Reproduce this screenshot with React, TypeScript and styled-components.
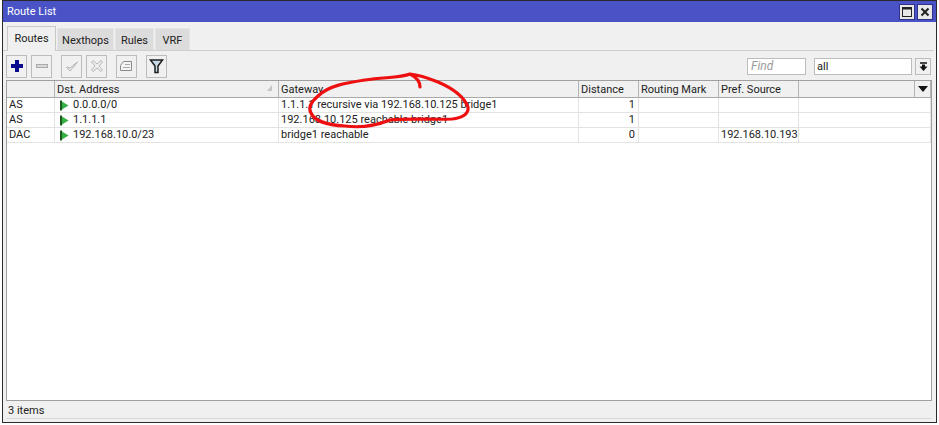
import React from 'react';
import styled, { createGlobalStyle } from 'styled-components';

const Global = createGlobalStyle`
  html, body { margin: 0; padding: 0; background: #ffffff; }
  body { font-family: Roboto, "Liberation Sans", Arial, sans-serif; font-size: 11px; color: #222222; }
`;

const Stage = styled.div`
  position: relative;
  width: 939px;
  height: 425px;
  overflow: hidden;
`;

const Win = styled.div`
  margin: 0 0 0 2px;
  width: 935px;
  height: 423px;
  box-sizing: border-box;
  border: 1px solid #2a2a2a;
  background: #f0f0f0;
  display: flex;
  flex-direction: column;
`;

const TitleBar = styled.div`
  height: 21px;
  flex: none;
  background: #4a53c6;
  color: #ffffff;
  display: flex;
  align-items: center;
  justify-content: space-between;
  padding: 0 3px 0 4px;
  font-size: 11px;
`;

const WinButtons = styled.div`
  display: flex;
  gap: 2px;
`;

const WinButton = styled.div`
  width: 14px;
  height: 14px;
  background: #e8e8e8;
  border: 1px solid #30308a;
  display: flex;
  align-items: center;
  justify-content: center;
`;

const TabStrip = styled.div`
  height: 28px;
  flex: none;
  margin: 0 2px 0 0;
  padding: 0 0 0 4px;
  display: flex;
  align-items: flex-end;
  gap: 1px;
  border-bottom: 1px solid #cfcfcf;
`;

const Tab = styled.div<{ $active?: boolean; $w: number }>`
  width: ${(p) => p.$w}px;
  height: ${(p) => (p.$active ? 25 : 22)}px;
  box-sizing: border-box;
  display: flex;
  align-items: center;
  justify-content: center;
  padding: ${(p) => (p.$active ? '0 0 2px' : '2px 0 0')};
  background: ${(p) => (p.$active ? '#f0f0f0' : '#dcdcdc')};
  border: 1px solid ${(p) => (p.$active ? '#c8c8c8' : '#e4e4e4')};
  border-bottom: none;
  margin-bottom: ${(p) => (p.$active ? -1 : 0)}px;
  font-size: 11px;
`;

const Toolbar = styled.div`
  height: 29px;
  flex: none;
  display: flex;
  align-items: center;
  padding: 1px 5px 0 3px;
  box-sizing: border-box;
`;

const ToolButton = styled.div<{ $gap?: number }>`
  width: 21px;
  height: 23px;
  box-sizing: border-box;
  margin-right: ${(p) => p.$gap ?? 4}px;
  background: #f0f0f0;
  border: 1px solid #bcbcbc;
  display: flex;
  align-items: center;
  justify-content: center;
`;

const Spacer = styled.div`
  flex: 1;
`;

const FindInput = styled.div`
  width: 59px;
  height: 17px;
  box-sizing: border-box;
  background: #ffffff;
  border: 1px solid #bdbdbd;
  color: #9a9a9a;
  font-style: italic;
  font-size: 12px;
  line-height: 15px;
  padding-left: 3px;
  margin-right: 8px;
`;

const AllInput = styled.div`
  width: 98px;
  height: 17px;
  box-sizing: border-box;
  background: #ffffff;
  border: 1px solid #bdbdbd;
  font-size: 11px;
  line-height: 15px;
  padding-left: 2px;
  margin-right: 3px;
`;

const DropButton = styled.div`
  width: 16px;
  height: 17px;
  box-sizing: border-box;
  border: 1px solid #bdbdbd;
  display: flex;
  align-items: center;
  justify-content: center;
`;

const Table = styled.div`
  flex: 1;
  margin: 0 4px 0 3px;
  background: #ffffff;
  border: 1px solid #a0a0a0;
  display: flex;
  flex-direction: column;
  min-height: 0;
`;

const Row = styled.div<{ $head?: boolean }>`
  display: flex;
  flex: none;
  height: ${(p) => (p.$head ? 17 : 15)}px;
  background: ${(p) => (p.$head ? '#f0f0f0' : '#ffffff')};
  border-bottom: 1px solid ${(p) => (p.$head ? '#a8a8a8' : '#e3e3e3')};
  box-sizing: border-box;
`;

const Cell = styled.div<{ $w?: number; $head?: boolean; $right?: boolean; $center?: boolean }>`
  width: ${(p) => (p.$w ? `${p.$w}px` : 'auto')};
  flex: ${(p) => (p.$w ? 'none' : 1)};
  box-sizing: border-box;
  position: relative;
  display: flex;
  align-items: center;
  justify-content: ${(p) => (p.$right ? 'flex-end' : p.$center ? 'center' : 'flex-start')};
  gap: 4px;
  padding: ${(p) => (p.$right ? '0 3px 0 0' : p.$center ? '0' : p.$head ? '2px 0 0 2px' : '0 0 0 2px')};
  border-right: 1px solid ${(p) => (p.$head ? '#b4b4b4' : '#e3e3e3')};
  white-space: nowrap;
  overflow: hidden;
  font-size: 11px;
  line-height: 14px;
`;

const SortMark = styled.svg`
  position: absolute;
  right: 5px;
  top: 4px;
`;

const FlagIcon = styled.span`
  margin-left: 3px;
  display: inline-flex;
`;

const StatusBar = styled.div`
  height: 18px;
  flex: none;
  margin: 0 4px 3px 3px;
  padding: 1px 0 0 2px;
  box-sizing: border-box;
  border-bottom: 1px solid #d8d8d8;
  display: flex;
  align-items: center;
  font-size: 11px;
`;

const Scribble = styled.svg`
  position: absolute;
  left: 0;
  top: 0;
  pointer-events: none;
`;

const columns = [48, 224, 300, 60, 80, 80];

const rows = [
  { flags: 'AS', dst: '0.0.0.0/0', gateway: '1.1.1.1 recursive via 192.168.10.125 bridge1', distance: '1', source: '' },
  { flags: 'AS', dst: '1.1.1.1', gateway: '192.168.10.125 reachable bridge1', distance: '1', source: '' },
  { flags: 'DAC', dst: '192.168.10.0/23', gateway: 'bridge1 reachable', distance: '0', source: '192.168.10.193' },
];

const Flag = () => (
  <FlagIcon>
    <svg width="9" height="11" viewBox="0 0 9 11">
      <path d="M1 .5v10" stroke="#1c5a22" strokeWidth="2" />
      <path d="M2 1.500l6.500 4L2 9.500z" fill="#35b044" />
    </svg>
  </FlagIcon>
);

export default function App() {
  return (
    <Stage>
      <Global />
      <Win>
        <TitleBar>
          <span>Route List</span>
          <WinButtons>
            <WinButton>
              <svg width="10" height="10" viewBox="0 0 10 10">
                <rect x=".5" y=".5" width="9" height="9" fill="none" stroke="#222" />
                <path d="M0 1.500h10" stroke="#222" strokeWidth="2" />
              </svg>
            </WinButton>
            <WinButton>
              <svg width="10" height="10" viewBox="0 0 10 10">
                <path d="M1.500 1.500l7 7M8.500 1.500l-7 7" stroke="#222" strokeWidth="2" />
              </svg>
            </WinButton>
          </WinButtons>
        </TitleBar>
        <TabStrip>
          <Tab $active $w={49}>Routes</Tab>
          <Tab $w={57}>Nexthops</Tab>
          <Tab $w={39}>Rules</Tab>
          <Tab $w={35}>VRF</Tab>
        </TabStrip>
        <Toolbar>
          <ToolButton>
            <svg width="14" height="14" viewBox="0 0 14 14">
              <path d="M7 1v12M1 7h12" stroke="#0a0a8c" strokeWidth="4" />
            </svg>
          </ToolButton>
          <ToolButton $gap={9}>
            <svg width="14" height="8" viewBox="0 0 14 8">
              <rect x="1.500" y="2.500" width="11" height="3" fill="#d8d8d8" stroke="#aaa" />
            </svg>
          </ToolButton>
          <ToolButton>
            <svg width="14" height="14" viewBox="0 0 14 14">
              <path d="M1.500 8l3.500 4 7.500-9-7.500 6z" fill="#eee" stroke="#b4b4b4" />
            </svg>
          </ToolButton>
          <ToolButton $gap={9}>
            <svg width="14" height="14" viewBox="0 0 14 14">
              <path d="M3 1.500l4 3.500 4-3.500 1.500 1.500-3.500 4 3.500 4-1.500 1.500-4-3.500-4 3.500L1.500 11l3.500-4-3.500-4z" fill="#eee" stroke="#b4b4b4" />
            </svg>
          </ToolButton>
          <ToolButton $gap={9}>
            <svg width="15" height="12" viewBox="0 0 15 12">
              <path d="M1.500 5.500l3-4h8v9h-11z" fill="#f4f4f4" stroke="#8a8a8a" />
              <path d="M6 4.500h5M4 7.500h7" stroke="#aaa" />
            </svg>
          </ToolButton>
          <ToolButton>
            <svg width="15" height="16" viewBox="0 0 15 16">
              <path d="M1.500 2h12L9 8v6.500H6V8z" fill="#c9dbe6" stroke="#1c1c1c" strokeWidth="1.500" />
            </svg>
          </ToolButton>
          <Spacer />
          <FindInput>Find</FindInput>
          <AllInput>all</AllInput>
          <DropButton>
            <svg width="9" height="9" viewBox="0 0 9 9">
              <path d="M1 1h7" stroke="#111" strokeWidth="1.500" />
              <path d="M3 2.500h3v2h2.500L4.500 9 .5 4.500H3z" fill="#111" />
            </svg>
          </DropButton>
        </Toolbar>
        <Table>
          <Row $head>
            <Cell $head $w={columns[0]} />
            <Cell $head $w={columns[1]}>
              Dst. Address
              <SortMark width="6" height="7" viewBox="0 0 6 7">
                <path d="M5 0v6H0z" fill="#c4c4c4" />
              </SortMark>
            </Cell>
            <Cell $head $w={columns[2]}>Gateway</Cell>
            <Cell $head $w={columns[3]}>Distance</Cell>
            <Cell $head $w={columns[4]}>Routing Mark</Cell>
            <Cell $head $w={columns[5]}>Pref. Source</Cell>
            <Cell $head />
            <Cell $head $center $w={16}>
              <svg width="10" height="6" viewBox="0 0 10 6">
                <path d="M0 0h10L5 6z" fill="#111" />
              </svg>
            </Cell>
          </Row>
          {rows.map((row) => (
            <Row key={row.dst}>
              <Cell $w={columns[0]}>{row.flags}</Cell>
              <Cell $w={columns[1]}>
                <Flag />
                {row.dst}
              </Cell>
              <Cell $w={columns[2]}>{row.gateway}</Cell>
              <Cell $right $w={columns[3]}>{row.distance}</Cell>
              <Cell $w={columns[4]} />
              <Cell $w={columns[5]}>{row.source}</Cell>
              <Cell />
            </Row>
          ))}
        </Table>
        <StatusBar>3 items</StatusBar>
      </Win>
      <Scribble width="939" height="425" viewBox="0 0 939 425">
        <path
          d="M420 87C420 82 416 77 410 74C400 78 385 77 365 80C345 83 328 86 318 96C311 102 308 108 311 113C314 120 326 125 345 126C360 128 375 126 390 120C405 118 435 120 452 119C462 118 469 114 468 107C464 97 452 88 438 82C428 78 420 75 410 74"
          fill="none"
          stroke="#ee1010"
          strokeWidth="3.2"
          strokeLinecap="round"
          strokeLinejoin="round"
        />
      </Scribble>
    </Stage>
  );
}
